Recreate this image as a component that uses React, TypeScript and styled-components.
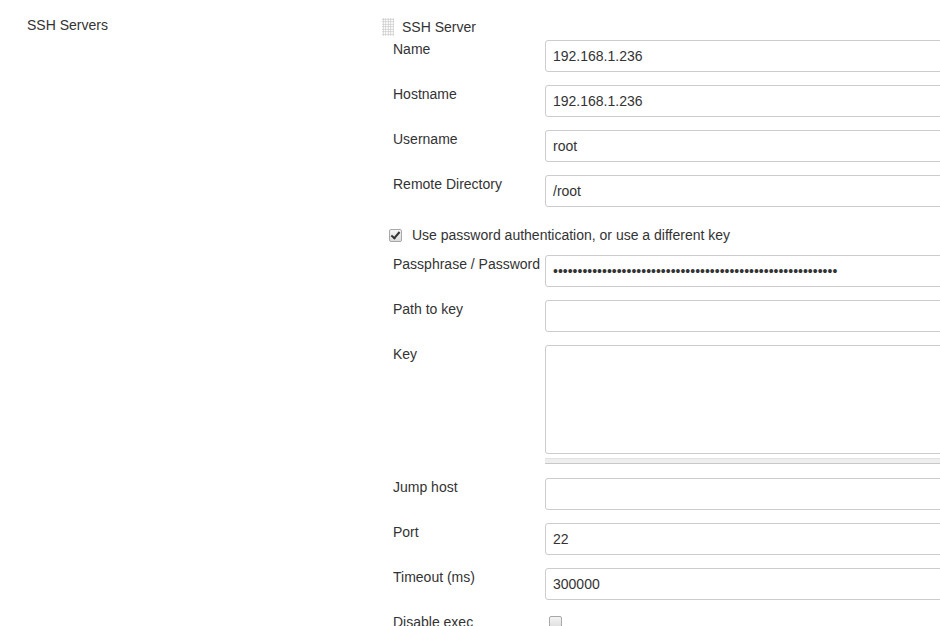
import React from "react";
import styled, { createGlobalStyle } from "styled-components";

const Global = createGlobalStyle`
  html, body { margin: 0; padding: 0; background: #fff; overflow: hidden; }
  body { font-family: "Liberation Sans", Arial, sans-serif; font-size: 14px; color: #333; }
`;

const Page = styled.div`
  display: grid;
  grid-template-columns: 382px 1fr;
  width: 940px;
  height: 626px;
  overflow: hidden;
`;

const SectionTitle = styled.div`
  padding: 17px 0 0 27px;
  line-height: 16px;
`;

const Block = styled.div`
  display: flex;
  flex-direction: column;
  padding-top: 18px;
  min-width: 0;
`;

const Heading = styled.div`
  display: flex;
  align-items: center;
  gap: 8px;
  height: 18px;
  margin-bottom: 4px;
  line-height: 18px;
`;

const Handle = styled.span`
  width: 12px;
  height: 18px;
  background-image: radial-gradient(circle, #c8c8c8 0.8px, transparent 1px);
  background-size: 2.5px 2.5px;
`;

const Row = styled.div<{ $gap?: number }>`
  display: grid;
  grid-template-columns: 152px 420px;
  margin-left: 11px;
  margin-bottom: ${(p) => p.$gap ?? 13}px;
`;

const Label = styled.label`
  padding-top: 1px;
  line-height: 16px;
  white-space: nowrap;
`;

const Input = styled.input`
  box-sizing: border-box;
  width: 420px;
  height: 32px;
  border: 1px solid #ccc;
  border-radius: 3px;
  padding: 0 7px;
  font-family: "Liberation Sans", Arial, sans-serif;
  font-size: 14px;
  color: #333;
  background: #fff;
  outline: none;
`;

const TextArea = styled.textarea`
  box-sizing: border-box;
  display: block;
  width: 420px;
  height: 109px;
  border: 1px solid #ccc;
  border-radius: 3px;
  resize: none;
  outline: none;
`;

const Grip = styled.div`
  margin-top: 4px;
  height: 4px;
  background: #eee;
  border-top: 1px solid #e2e2e2;
  border-bottom: 1px solid #c8c8c8;
`;

const CheckRow = styled.div`
  display: flex;
  align-items: center;
  gap: 10px;
  margin: 21px 0 13px 7px;
  height: 14px;
  line-height: 16px;
`;

const Box = styled.input`
  appearance: none;
  -webkit-appearance: none;
  box-sizing: border-box;
  position: relative;
  margin: 0;
  width: 13px;
  height: 13px;
  border: 1px solid #a8a8a8;
  border-radius: 2px;
  background: linear-gradient(#f4f4f4, #dcdcdc);
  &:checked::after {
    content: "";
    position: absolute;
    left: 3px;
    top: 0px;
    width: 3px;
    height: 7px;
    border: solid #333;
    border-width: 0 2px 2px 0;
    transform: rotate(40deg);
  }
`;

const CheckCell = styled.div`
  padding: 3px 0 0 4px;
  display: flex;
`;

const pw = "x".repeat(58);

export default function App() {
  return (
    <>
      <Global />
      <Page>
        <SectionTitle>SSH Servers</SectionTitle>
        <Block>
          <Heading>
            <Handle />
            <span>SSH Server</span>
          </Heading>
          <Row>
            <Label>Name</Label>
            <Input defaultValue="192.168.1.236" />
          </Row>
          <Row>
            <Label>Hostname</Label>
            <Input defaultValue="192.168.1.236" />
          </Row>
          <Row>
            <Label>Username</Label>
            <Input defaultValue="root" />
          </Row>
          <Row $gap={0}>
            <Label>Remote Directory</Label>
            <Input defaultValue="/root" />
          </Row>
          <CheckRow>
            <Box type="checkbox" defaultChecked />
            <span>Use password authentication, or use a different key</span>
          </CheckRow>
          <Row>
            <Label>Passphrase / Password</Label>
            <Input type="password" defaultValue={pw} />
          </Row>
          <Row>
            <Label>Path to key</Label>
            <Input />
          </Row>
          <Row $gap={14}>
            <Label>Key</Label>
            <div>
              <TextArea />
              <Grip />
            </div>
          </Row>
          <Row>
            <Label>Jump host</Label>
            <Input />
          </Row>
          <Row>
            <Label>Port</Label>
            <Input defaultValue="22" />
          </Row>
          <Row>
            <Label>Timeout (ms)</Label>
            <Input defaultValue="300000" />
          </Row>
          <Row>
            <Label>Disable exec</Label>
            <CheckCell>
              <Box type="checkbox" />
            </CheckCell>
          </Row>
        </Block>
      </Page>
    </>
  );
}
